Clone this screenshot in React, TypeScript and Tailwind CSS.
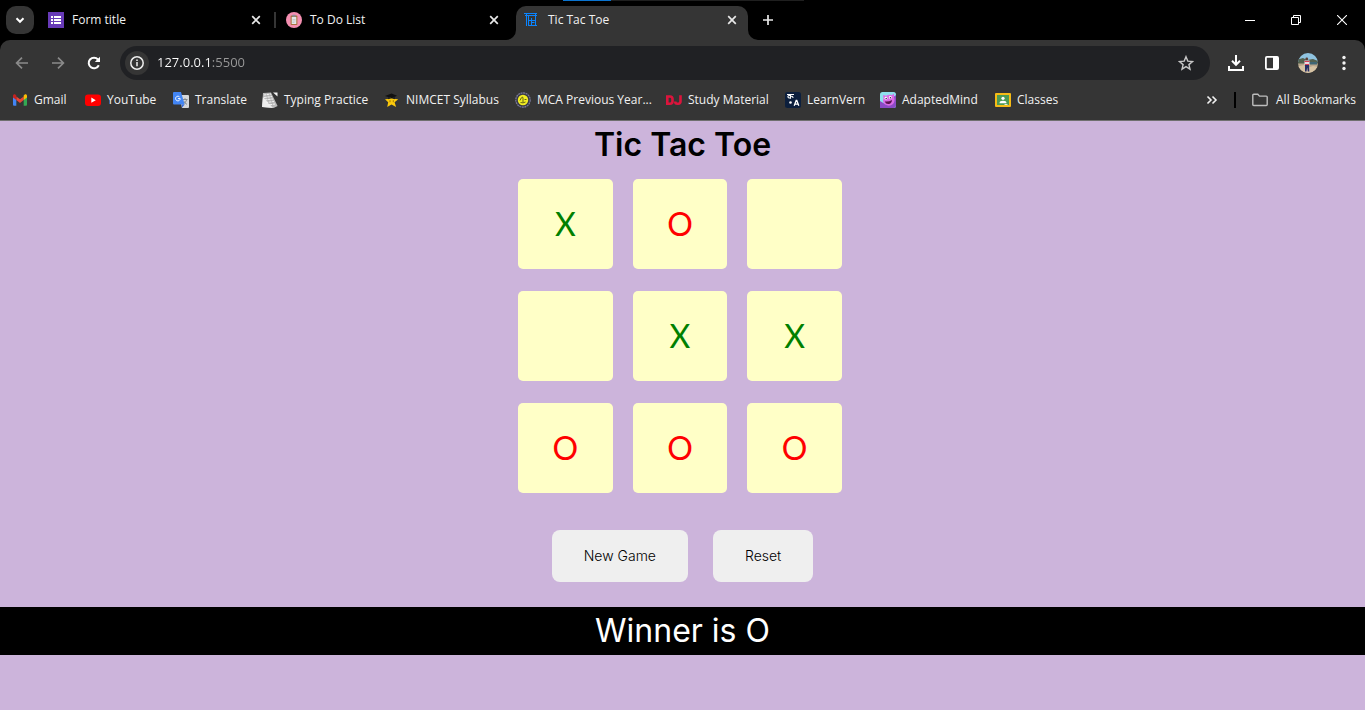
import { useState } from "react";
import type { ReactNode } from "react";

type Mark = "X" | "O" | "";

const LINES = [
  [0, 1, 2], [3, 4, 5], [6, 7, 8],
  [0, 3, 6], [1, 4, 7], [2, 5, 8],
  [0, 4, 8], [2, 4, 6],
];

const EMPTY: Mark[] = ["", "", "", "", "", "", "", "", ""];
const OPENING: Mark[] = ["X", "O", "", "", "X", "X", "O", "O", "O"];

function findWinner(cells: Mark[]): Mark {
  const line = LINES.find(([a, b, c]) => cells[a] && cells[a] === cells[b] && cells[a] === cells[c]);
  return line ? cells[line[0]] : "";
}

/* ---------- favicons ---------- */

const FormIcon = () => (
  <svg viewBox="0 0 16 16" className="size-4 shrink-0" shapeRendering="crispEdges" aria-hidden="true">
    <rect width="16" height="16" fill="#673ab7" />
    <path d="M3 4h2v2H3zM6 4h7v2H6zM3 7h2v2H3zM6 7h7v2H6zM3 10h2v2H3zM6 10h7v2H6z" fill="#fff" />
  </svg>
);

const TodoIcon = () => (
  <svg viewBox="0 0 16 16" className="size-4 shrink-0" aria-hidden="true">
    <circle cx="8" cy="8" r="8" fill="#f48fb1" />
    <rect x="4.6" y="3.6" width="6.8" height="9.4" rx=".8" fill="#a9713f" />
    <rect x="5.7" y="5" width="4.6" height="7" fill="#e4e7e7" />
    <rect x="6.4" y="2.8" width="3.2" height="2" rx=".5" fill="#8a8f98" />
    <path d="M6.5 7.5h3M6.5 9h3M6.5 10.5h2" stroke="#b3b8bb" strokeWidth=".6" />
  </svg>
);

const TicTacIcon = () => (
  <svg viewBox="0 0 16 16" className="size-4 shrink-0" fill="none" stroke="#0a84ff" strokeWidth="1" aria-hidden="true">
    <path d="M0 1.5h13M1 3.500h12M2.500 2v12M4.500 3v11M11.500 1v13M7.500 6v7M5 8.500h7M4 13.500h9M7.500 10.500h3" />
  </svg>
);

const GmailIcon = () => (
  <svg viewBox="0 0 16 16" className="size-4 shrink-0" aria-hidden="true">
    <path d="M1 4.200v8.600a1 1 0 0 0 1 1h2.300V7.200z" fill="#4285f4" />
    <path d="M15 4.200v8.600a1 1 0 0 1-1 1h-2.300V7.200z" fill="#34a853" />
    <path d="M4.300 4.400 8 7.200l3.700-2.800v3.700L8 10.900 4.300 8.100z" fill="#ea4335" />
    <path d="M1 4c0-1.500 1.500-2.100 2.500-1.300l.8.700v4.700L1 5.600z" fill="#c5221f" />
    <path d="M15 4c0-1.500-1.500-2.100-2.500-1.300l-.8.700v4.700L15 5.600z" fill="#fbbc04" />
  </svg>
);

const YouTubeIcon = () => (
  <svg viewBox="0 0 16 16" className="size-4 shrink-0" aria-hidden="true">
    <rect y="2.500" width="16" height="11.500" rx="3" fill="#f00" />
    <path d="M6.300 5.600v5.200l4.500-2.600z" fill="#fff" />
  </svg>
);

const TranslateIcon = () => (
  <svg viewBox="0 0 16 16" className="size-4 shrink-0" aria-hidden="true">
    <path d="M6 3h9a1 1 0 0 1 1 1v11a1 1 0 0 1-1 1H9z" fill="#d5d7da" />
    <path d="M9.500 7.500h5M12 6.200v1.300M13.600 7.600c-.4 1.900-1.700 3.500-3.300 4.300M10.700 8.800c.5 1.400 1.900 2.900 3.300 3.500" stroke="#7b8187" strokeWidth=".9" fill="none" />
    <path d="M1 0h7l3.600 12.500H1a1 1 0 0 1-1-1V1a1 1 0 0 1 1-1z" fill="#4285f4" />
    <path d="m8.600 12.500 3 0L9 15.800z" fill="#3367d6" />
    <path d="M6.500 4.900a2.300 2.300 0 1 0 .7 1.700H4.900" stroke="#fff" strokeWidth="1" fill="none" />
  </svg>
);

const TypingIcon = () => (
  <svg viewBox="0 0 16 16" className="size-4 shrink-0" aria-hidden="true">
    <path d="m1 1 8-.6L15.600 14l-4 2L0 15z" fill="#b9b9b9" />
    <path d="M0 15 1 5l10 11z" fill="#ededed" />
    <path d="m2 3 7-1M2 5.500l8-1M2 8l9-1M4 10.500l8-1M6 13l7-1" stroke="#f3f3f3" strokeWidth="1" />
    <path d="m4 1 3 11M7 1l4 13" stroke="#a0a0a0" strokeWidth=".5" />
    <path d="m11 .5 4.500 0 0 4z" fill="#f5f5f5" />
  </svg>
);

const NimcetIcon = () => (
  <svg viewBox="0 0 16 16" className="size-4 shrink-0" aria-hidden="true">
    <path d="m7.500 3.500 1.700 3.300 5 .4-3.600 3 1.500 4.800-4.600-2.500L3.200 15l1-4.800L1 7.200l4.700-.4z" fill="#fbc90c" />
    <path d="M6 8.200v2M9.300 8.200v2" stroke="#8b6500" strokeWidth=".8" />
    <path d="m1 4 6.500-2.400L13 3.800 8 6.300z" fill="#111" />
    <path d="M4 5v2.300q3.500-1.500 7 0V4.600L8 6.300z" fill="#222" />
  </svg>
);

const McaIcon = () => (
  <svg viewBox="0 0 16 16" className="size-4 shrink-0" aria-hidden="true">
    <circle cx="8" cy="8" r="7.200" fill="#3a3a44" stroke="#7a7a9c" strokeWidth="1.200" strokeDasharray="2 .6" />
    <circle cx="8" cy="8" r="5.200" fill="#f2ed22" />
    <path d="M5 8.500q1-3.500 3-3.500M8 5.500v5M5.500 10.500q2.500 1 5-.5M9.500 7.500h2" stroke="#55551a" strokeWidth=".9" fill="none" />
  </svg>
);

const StudyIcon = () => (
  <svg viewBox="0 0 16 16" className="size-4 shrink-0" fill="none" stroke="#dc143c" strokeWidth="2.600" aria-hidden="true">
    <path d="M1.300 4.500h2.700q2.500 0 2.500 2.500v2.200q0 2.500-2.500 2.500H1.300z" />
    <path d="M14.500 3.200v6q0 2.500-2.400 2.500h-.6q-2.300 0-2.300-2.200" />
  </svg>
);

const LearnIcon = () => (
  <svg viewBox="0 0 16 16" className="size-4 shrink-0" aria-hidden="true">
    <rect width="16" height="16" rx="2.500" fill="#0c1f3d" />
    <path d="M2 2.500h7M5.500 2.500v4.300M5.500 4.500a1.300 1.300 0 1 0-.5 1.200M5.500 4.500q2.500-1 2.500 1.500" stroke="#fff" strokeWidth="1.100" fill="none" />
    <circle cx="5.500" cy="10.500" r="1.300" fill="#fff" />
    <path d="m9.200 13.800 2-5.300h.6l2 5.300M9.900 12.200h3.200" stroke="#fff" strokeWidth="1.300" fill="none" />
  </svg>
);

const AdaptedIcon = () => (
  <svg viewBox="0 0 16 16" className="size-4 shrink-0" aria-hidden="true">
    <rect width="16" height="16" rx="2.500" fill="#8fe0ee" />
    <path d="M0 16V9l5 3 5-4 6-5v10.500A2.500 2.500 0 0 1 13.500 16z" fill="#8d4bc7" />
    <path d="m3 3 3 .8Q9 2 12 3l2-1.500V5q1.500 4-1 7-3.500 3-8 .5-3-3-1.500-6z" fill="#d96be6" />
    <circle cx="6" cy="6.200" r="1.400" fill="#fff" />
    <circle cx="10.300" cy="5.500" r="1.400" fill="#fff" />
    <circle cx="6.200" cy="6.400" r=".7" fill="#2a1740" />
    <circle cx="10.400" cy="5.700" r=".7" fill="#2a1740" />
    <path d="M4.800 9.500q4 .5 7.200-1.500-.3 3.700-3.300 4T4.800 9.500z" fill="#5a1250" />
  </svg>
);

const ClassesIcon = () => (
  <svg viewBox="0 0 16 16" className="size-4 shrink-0" aria-hidden="true">
    <rect y="1" width="16" height="14" rx="1" fill="#f6bb16" />
    <rect x="2" y="3" width="12" height="10" fill="#4c9a55" />
    <circle cx="8" cy="6.300" r="1.600" fill="#fff" />
    <path d="M4.500 11.200q0-2.400 3.500-2.400t3.500 2.400z" fill="#fff" />
    <path d="M9.500 12.200h3V13h-3z" fill="#fff" />
  </svg>
);

const Avatar = () => (
  <svg viewBox="0 0 20 20" className="size-5" aria-hidden="true">
    <clipPath id="avatar-clip"><circle cx="10" cy="10" r="10" /></clipPath>
    <g clipPath="url(#avatar-clip)">
      <rect width="20" height="9" fill="#8fc3e0" />
      <path d="M0 6.500 5 5l4 2 6-1 5 2v5H0z" fill="#53614f" />
      <path d="M0 10.500h20V20H0z" fill="#b9a68c" />
      <path d="M0 13.500 6 12l3 3 6-2 5 1v6H0z" fill="#d6c3a4" />
      <path d="M11 9h8v2.500h-8z" fill="#3f6675" />
      <rect x="7.500" y="4.500" width="2.500" height="3" rx="1" fill="#5a3d35" />
      <path d="M6.500 7.500h5v4.500h-5z" fill="#e8dce4" />
      <path d="M6.500 8.500h5M7 11.500h4" stroke="#d83f57" />
      <path d="M7 12h4l.3 6.500H9.800l-.6-4-.7 4H7z" fill="#262f66" />
    </g>
  </svg>
);

/* ---------- browser chrome ---------- */

const CloseGlyph = () => (
  <svg viewBox="0 0 16 16" className="size-4" fill="none" stroke="#e8e8e8" strokeWidth="1.700" aria-hidden="true">
    <path d="m4.200 4.200 7.600 7.600M11.800 4.200l-7.600 7.600" />
  </svg>
);

function Flare({ side }: { side: "left" | "right" }) {
  return side === "left" ? (
    <svg viewBox="0 0 10 10" className="absolute bottom-0 -left-2.5 size-2.5" aria-hidden="true">
      <path d="M10 0v10H0A10 10 0 0 0 10 0z" fill="#353535" />
    </svg>
  ) : (
    <svg viewBox="0 0 10 10" className="absolute -right-2.5 bottom-0 size-2.5" aria-hidden="true">
      <path d="M0 0v10h10A10 10 0 0 1 0 0z" fill="#353535" />
    </svg>
  );
}

function Tab({ icon, title, active, divider }: { icon: ReactNode; title: string; active?: boolean; divider?: boolean }) {
  return (
    <div
      className={
        active
          ? "relative flex h-[34px] w-[232px] items-center gap-2 rounded-t-[10px] bg-[#353535] px-2 pb-1.5"
          : "relative flex h-[34px] w-[232px] items-center gap-2 px-2 pb-1.5"
      }
    >
      {active && <Flare side="left" />}
      {active && <Flare side="right" />}
      {icon}
      <span className="flex-1 text-xs text-[#f1f1f1]">{title}</span>
      <button type="button" aria-label={`Close ${title}`} className="grid size-4 place-items-center">
        <CloseGlyph />
      </button>
      {divider && <span className="absolute top-1.5 -right-1 h-4 w-0.5 bg-[#353535]" />}
    </div>
  );
}

function TabStrip() {
  return (
    <div className="relative flex h-10 justify-between bg-black">
      <div className="absolute top-0 left-[563px] flex h-px w-[241px] bg-[#1f1f1f]">
        <span className="w-12 bg-[#0a74d0]" />
      </div>
      <div className="flex items-start gap-1.5 pt-1.5 pl-1.5">
        <button type="button" aria-label="Search tabs" className="grid size-7 place-items-center rounded-[10px] bg-[#353535]">
          <svg viewBox="0 0 16 16" className="size-4" fill="none" stroke="#fff" strokeWidth="2" aria-hidden="true">
            <path d="m4.500 6.300 3.500 3.500 3.500-3.500" />
          </svg>
        </button>
        <Tab icon={<FormIcon />} title="Form title" divider />
        <Tab icon={<TodoIcon />} title="To Do List" />
        <Tab icon={<TicTacIcon />} title="Tic Tac Toe" active />
        <button type="button" aria-label="New tab" className="grid size-7 place-items-center">
          <svg viewBox="0 0 16 16" className="size-4" fill="none" stroke="#e8e8e8" strokeWidth="1.700" aria-hidden="true">
            <path d="M8 3v10M3 8h10" />
          </svg>
        </button>
      </div>
      <div className="flex">
        <button type="button" aria-label="Minimize" className="grid w-[46px] place-items-center">
          <svg viewBox="0 0 10 10" className="size-2.5" stroke="#fff" aria-hidden="true"><path d="M0 5.500h10" /></svg>
        </button>
        <button type="button" aria-label="Restore" className="grid w-[46px] place-items-center">
          <svg viewBox="0 0 10 10" className="size-2.5" stroke="#fff" fill="none" aria-hidden="true">
            <path d="M.5 2.500h7v7h-7zM2.500 2.500v-2h7v7h-2" />
          </svg>
        </button>
        <button type="button" aria-label="Close window" className="grid w-[46px] place-items-center">
          <svg viewBox="0 0 10 10" className="size-2.5" stroke="#fff" strokeWidth="1.100" aria-hidden="true"><path d="m0 0 10 10M10 0 0 10" /></svg>
        </button>
      </div>
    </div>
  );
}

function ToolButton({ label, children }: { label: string; children: ReactNode }) {
  return (
    <button type="button" aria-label={label} className="grid size-9 place-items-center">
      {children}
    </button>
  );
}

function Toolbar() {
  return (
    <div className="flex h-[46px] items-center gap-2 pr-[3px] pl-1">
      <div className="flex">
        <ToolButton label="Back">
          <svg viewBox="0 0 16 16" className="size-4" fill="none" stroke="#8a8a8a" strokeWidth="1.700" aria-hidden="true">
            <path d="M14 8H3M8 2.600 2.600 8 8 13.400" />
          </svg>
        </ToolButton>
        <ToolButton label="Forward">
          <svg viewBox="0 0 16 16" className="size-4" fill="none" stroke="#8a8a8a" strokeWidth="1.700" aria-hidden="true">
            <path d="M2 8h11M8 2.600 13.400 8 8 13.400" />
          </svg>
        </ToolButton>
        <ToolButton label="Reload">
          <svg viewBox="0 0 16 16" className="size-4" aria-hidden="true">
            <path d="M12.800 10.300A5.300 5.300 0 1 1 12 4.500" fill="none" stroke="#fff" strokeWidth="2" />
            <path d="M14 1.800v5.200H8.800z" fill="#fff" />
          </svg>
        </ToolButton>
      </div>
      <div className="flex h-[34px] flex-1 items-center gap-2 rounded-full bg-[#202124] pr-4 pl-[5px]">
        <button type="button" aria-label="View site information" className="grid size-6 place-items-center rounded-full bg-[#353535]">
          <svg viewBox="0 0 16 16" className="size-4" fill="none" stroke="#eee" strokeWidth="1.500" aria-hidden="true">
            <circle cx="8" cy="8" r="6.200" />
            <path d="M8 7v4.300M8 4.500V6" />
          </svg>
        </button>
        <input
          aria-label="Address and search bar"
          defaultValue="127.0.0.1:5500"
          className="min-w-0 flex-1 bg-[linear-gradient(90deg,#ffffff_55px,#9a9a9a_55px)] bg-clip-text text-[13px] text-transparent outline-none"
        />
        <button type="button" aria-label="Bookmark this tab" className="grid size-4 place-items-center">
          <svg viewBox="0 0 16 16" className="size-4" fill="none" stroke="#c7c7c7" strokeWidth="1.400" aria-hidden="true">
            <path d="m8 1.700 1.800 4.400 4.700.4-3.600 3.100 1.100 4.600L8 11.700l-4 2.500 1.100-4.600-3.600-3.100 4.700-.4z" />
          </svg>
        </button>
      </div>
      <div className="flex">
        <ToolButton label="Downloads">
          <svg viewBox="0 0 16 16" className="size-4" fill="none" stroke="#fff" strokeWidth="2" aria-hidden="true">
            <path d="M8 0v9M4 5.800l4 4 4-4M1 11v4h14v-4" />
          </svg>
        </ToolButton>
        <ToolButton label="Side panel">
          <svg viewBox="0 0 16 16" className="size-4" aria-hidden="true">
            <rect x="1.900" y="1.900" width="12.200" height="12.200" rx="1" fill="none" stroke="#fff" strokeWidth="1.800" />
            <path d="M9 2h5v12H9z" fill="#fff" />
          </svg>
        </ToolButton>
        <ToolButton label="Profile"><Avatar /></ToolButton>
        <ToolButton label="Menu">
          <svg viewBox="0 0 16 16" className="size-4" fill="#f2f2f2" aria-hidden="true">
            <circle cx="8" cy="2.500" r="1.700" />
            <circle cx="8" cy="8" r="1.700" />
            <circle cx="8" cy="13.500" r="1.700" />
          </svg>
        </ToolButton>
      </div>
    </div>
  );
}

const BOOKMARKS: { name: string; icon: ReactNode; width: string }[] = [
  { name: "Gmail", icon: <GmailIcon />, width: "w-[73px]" },
  { name: "YouTube", icon: <YouTubeIcon />, width: "w-[88px]" },
  { name: "Translate", icon: <TranslateIcon />, width: "w-[89px]" },
  { name: "Typing Practice", icon: <TypingIcon />, width: "w-[122px]" },
  { name: "NIMCET Syllabus", icon: <NimcetIcon />, width: "w-[131px]" },
  { name: "MCA Previous Year...", icon: <McaIcon />, width: "w-[151px]" },
  { name: "Study Material", icon: <StudyIcon />, width: "w-[119px]" },
  { name: "LearnVern", icon: <LearnIcon />, width: "w-[95px]" },
  { name: "AdaptedMind", icon: <AdaptedIcon />, width: "w-[115px]" },
  { name: "Classes", icon: <ClassesIcon />, width: "w-20" },
];

function BookmarksBar() {
  return (
    <nav aria-label="Bookmarks" className="flex h-[35px] items-center justify-between border-b border-[#6f6f6f] pr-[9px] pb-1.5 pl-3 text-xs text-[#f1f1f1]">
      <div className="flex">
        {BOOKMARKS.map((b) => (
          <a key={b.name} href="#" className={`flex items-center gap-1.5 whitespace-nowrap ${b.width}`}>
            {b.icon}
            {b.name}
          </a>
        ))}
      </div>
      <div className="flex items-center">
        <button type="button" aria-label="More bookmarks" className="grid size-4 place-items-center">
          <svg viewBox="0 0 16 16" className="size-4" fill="none" stroke="#f1f1f1" strokeWidth="1.600" aria-hidden="true">
            <path d="m3.500 4.500 3.500 3.500-3.500 3.500M8.500 4.500 12 8l-3.500 3.500" />
          </svg>
        </button>
        <span className="mr-4 ml-3.5 h-4 w-0.5 bg-black" />
        <a href="#" className="flex items-center gap-2 whitespace-nowrap">
          <svg viewBox="0 0 16 16" className="size-4" fill="none" stroke="#bdbdbd" strokeWidth="1.400" aria-hidden="true">
            <path d="M.8 3.200q0-1 1-1h4l1.700 1.900h6.700q1 0 1 1v7.400q0 1-1 1H1.800q-1 0-1-1z" />
          </svg>
          All Bookmarks
        </a>
      </div>
    </nav>
  );
}

/* ---------- game ---------- */

export default function App() {
  const [cells, setCells] = useState<Mark[]>(OPENING);
  const [turn, setTurn] = useState<Mark>("X");
  const winner = findWinner(cells);

  const play = (index: number) => {
    if (cells[index] || winner) return;
    setCells(cells.map((c, i) => (i === index ? turn : c)));
    setTurn(turn === "X" ? "O" : "X");
  };

  const restart = () => {
    setCells(EMPTY);
    setTurn("X");
  };

  return (
    <div className="flex min-h-screen flex-col bg-[#ccb4db]">
      <header className="bg-black font-['Open_Sans','Noto_Sans',sans-serif]">
        <TabStrip />
        <div className="rounded-t-[10px] bg-[#353535]">
          <Toolbar />
          <BookmarksBar />
        </div>
      </header>
      <main className="flex flex-col text-center font-['Inter','Lato',sans-serif] text-black">
        <h1 className="text-[32px] leading-[48px] font-semibold">Tic Tac Toe</h1>
        <div className="flex justify-center pt-2.5 pr-[5px]">
          <div className="grid w-[324px] grid-cols-3 gap-x-5 gap-y-[22px]">
            {cells.map((mark, i) => (
              <button
                key={i}
                type="button"
                aria-label={`Cell ${i + 1} ${mark}`}
                onClick={() => play(i)}
                className={`h-[90px] rounded-[5px] bg-[#ffffc7] font-['Lato',sans-serif] text-[32px] leading-[48px] ${mark === "X" ? "text-[#008000]" : "text-[#ff0000]"}`}
              >
                {mark}
              </button>
            ))}
          </div>
        </div>
        <div className="flex justify-center gap-[25px] pt-[37px] pb-[25px]">
          <button type="button" onClick={restart} className="h-[52px] rounded-lg bg-[#efefef] px-8 text-sm font-light">New Game</button>
          <button type="button" onClick={restart} className="h-[52px] rounded-lg bg-[#efefef] px-8 text-sm font-light">Reset</button>
        </div>
        {winner && <p className="bg-black text-[32px] leading-[48px] text-white">Winner is {winner}</p>}
      </main>
    </div>
  );
}
